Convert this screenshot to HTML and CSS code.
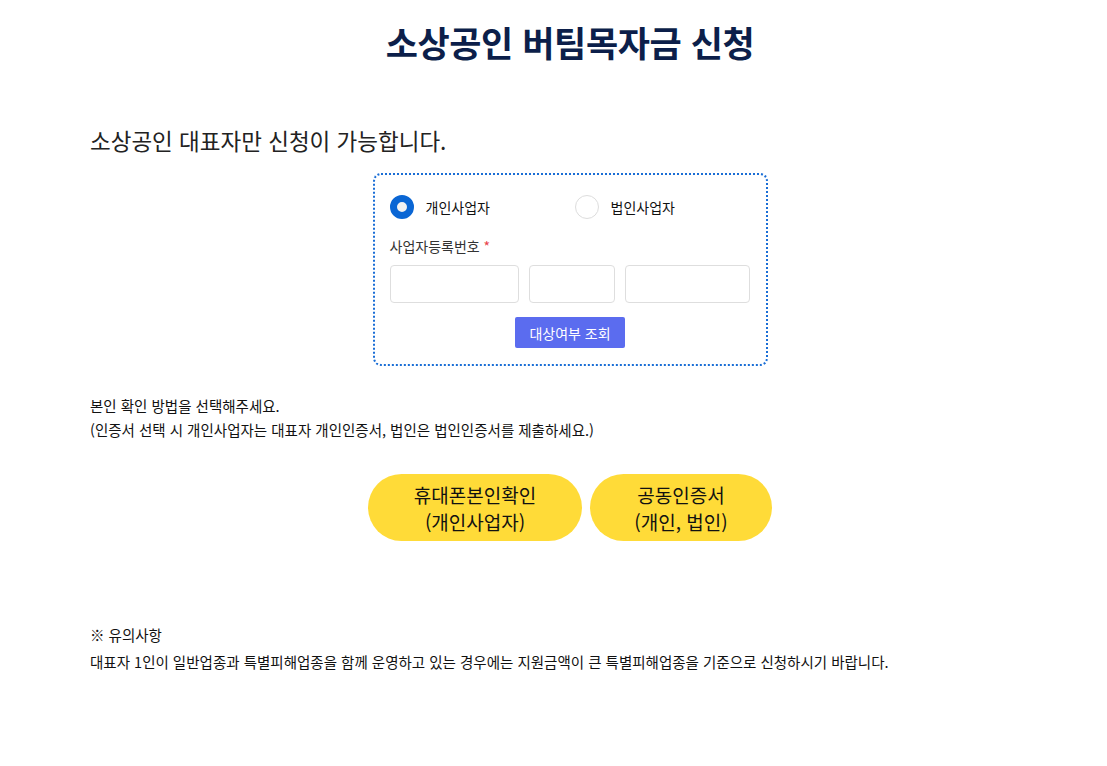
FILE: index.html
```html
<!DOCTYPE html>
<html lang="ko">

<head>
    <meta charset="UTF-8">
    <title>소상공인 버팀목자금 신청</title>
    <link rel="stylesheet" href="styles.css">
</head>

<body>
    <div class="wrap">
        <h1 class="title">소상공인 버팀목자금 신청</h1>

        <p class="lead">소상공인 대표자만 신청이 가능합니다.</p>

        <!-- 사업자 조회 -->
        <div class="check-box">
            <div class="radio-row">
                <label class="radio">
                    <input type="radio" name="biz" checked>
                    <span class="dot"></span>
                    개인사업자
                </label>
                <label class="radio">
                    <input type="radio" name="biz">
                    <span class="dot"></span>
                    법인사업자
                </label>
            </div>
            <div class="field-label">사업자등록번호 <span class="req">*</span></div>
            <div class="inputs">
                <input type="text" class="in-1">
                <input type="text" class="in-2">
                <input type="text" class="in-3">
            </div>
            <div class="btn-row">
                <button type="button" class="search-btn">대상여부 조회</button>
            </div>
        </div>

        <p class="guide">
            본인 확인 방법을 선택해주세요.<br>
            (인증서 선택 시 개인사업자는 대표자 개인인증서, 법인은 법인인증서를 제출하세요.)
        </p>

        <div class="auth-btns">
            <button type="button" class="auth-btn phone">휴대폰본인확인<br>(개인사업자)</button>
            <button type="button" class="auth-btn cert">공동인증서<br>(개인, 법인)</button>
        </div>

        <div class="notice">
            <p>※ 유의사항</p>
            <p>대표자 1인이 일반업종과 특별피해업종을 함께 운영하고 있는 경우에는 지원금액이 큰 특별피해업종을 기준으로 신청하시기 바랍니다.</p>
        </div>
    </div>
</body>

</html>
```

FILE: styles.css
```css
body {
    margin: 0;
    font-family: "Noto Sans CJK KR", "Noto Sans", sans-serif;
    color: #111;
    background-color: #fff;
}

.wrap {
    width: 960px;
    margin-left: 90px;
    padding-top: 17px;
}

.title {
    margin: 0;
    text-align: center;
    font-size: 35px;
    font-weight: 700;
    line-height: 50px;
    color: #0c1f4a;
    letter-spacing: -0.4px;
}

.lead {
    margin: 56px 0 0;
    font-size: 22.5px;
    line-height: 34px;
    color: #222;
}

.check-box {
    width: 361px;
    margin: 16px auto 0;
    padding: 19px 15px 16px;
    border: 2px dotted #1a6ed6;
    border-radius: 8px;
}

.radio-row {
    display: flex;
}

.radio {
    flex: none;
    display: flex;
    align-items: center;
    gap: 12px;
    width: 185px;
    font-size: 14px;
    color: #111;
    height: 26px;
}

.radio input {
    display: none;
}

.dot {
    box-sizing: border-box;
    width: 24px;
    height: 24px;
    border-radius: 50%;
    border: 1px solid #ddd;
    background: #fff;
}

.radio input:checked + .dot {
    border: 7px solid #0a66d4;
    background: #f2f2f2;
}

.field-label {
    margin-top: 16px;
    font-size: 14px;
    line-height: 20px;
    color: #333;
}

.req {
    color: #e8424a;
}

.inputs {
    display: flex;
    gap: 10px;
    margin-top: 9px;
}

.inputs input {
    box-sizing: border-box;
    height: 38px;
    border: 1px solid #dedede;
    border-radius: 4px;
    padding: 0 8px;
    font-size: 14px;
}

.in-1 {
    width: 129px;
}

.in-2 {
    width: 86px;
}

.in-3 {
    width: 125px;
}

.btn-row {
    text-align: center;
    margin-top: 14px;
}

.search-btn {
    width: 110px;
    height: 31px;
    border: none;
    border-radius: 2px;
    background-color: #5b6cef;
    color: #fff;
    font-family: inherit;
    font-size: 14px;
    cursor: pointer;
}

.guide {
    margin: 28px 0 0;
    font-size: 14.5px;
    line-height: 24px;
    color: #111;
}

.auth-btns {
    display: flex;
    justify-content: center;
    gap: 8px;
    margin-top: 32px;
}

.auth-btn {
    height: 67px;
    border: none;
    border-radius: 34px;
    background-color: #ffdb38;
    color: #111;
    font-family: inherit;
    font-size: 19px;
    line-height: 27px;
    cursor: pointer;
}

.auth-btn.phone {
    width: 214px;
}

.auth-btn.cert {
    width: 182px;
}

.notice {
    margin-top: 80px;
    font-size: 14.5px;
    line-height: 27px;
    color: #111;
}

.notice p {
    margin: 0;
}
```
